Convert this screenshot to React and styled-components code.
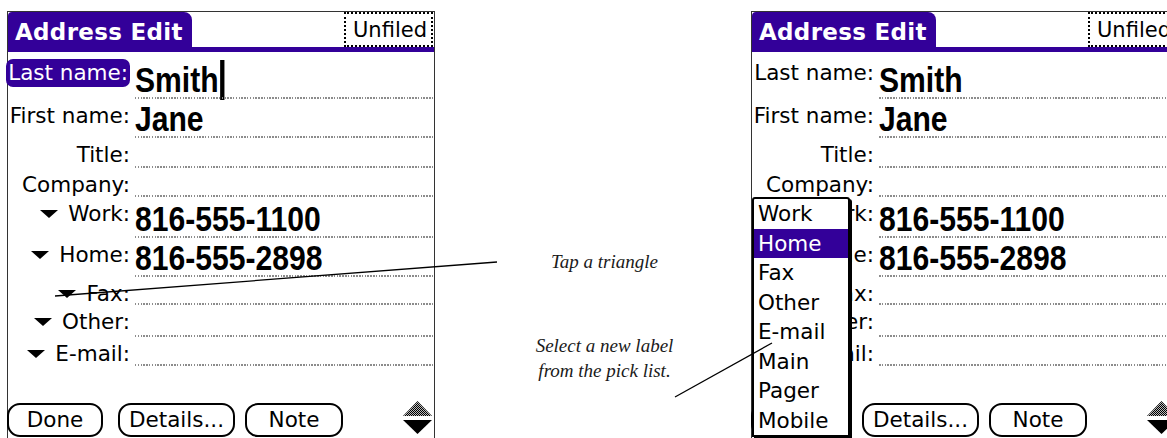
import React from 'react';
import styled, { createGlobalStyle } from 'styled-components';

const PURPLE = '#330099';

const GlobalStyle = createGlobalStyle`
  html, body {
    margin: 0;
    padding: 0;
    background: #fff;
  }
  body {
    width: 1167px;
    height: 438px;
    overflow: hidden;
  }
`;

const Page = styled.div`
  position: relative;
  width: 1167px;
  height: 438px;
  overflow: hidden;
  box-sizing: border-box;
  padding: 11px 0 0 7px;
  display: flex;
  align-items: flex-start;
  font-family: 'DejaVu Sans', 'Liberation Sans', sans-serif;
  color: #000;
`;

const Screen = styled.div`
  position: relative;
  flex: none;
  width: 428px;
  height: 427px;
  box-sizing: border-box;
  border: 1px solid #333;
  border-bottom: none;
  display: flex;
  flex-direction: column;
`;

const TitleBar = styled.div`
  display: flex;
  align-items: flex-start;
  height: 35px;
  border-bottom: 5px solid ${PURPLE};
`;

const TitleTab = styled.div`
  width: 184px;
  height: 35px;
  box-sizing: border-box;
  padding-left: 7px;
  background: ${PURPLE};
  color: #fff;
  border-radius: 4px 8px 0 0;
  font-weight: bold;
  font-size: 23px;
  line-height: 40px;
  letter-spacing: 0.3px;
  white-space: nowrap;
`;

const Category = styled.div`
  margin-left: auto;
  margin-right: 1px;
  height: 35px;
  box-sizing: border-box;
  border: 2px dotted #000;
  padding: 0 4px 0 7px;
  font-size: 21px;
  line-height: 33px;
  white-space: nowrap;
`;

const Form = styled.div`
  padding-top: 4px;
  display: flex;
  flex-direction: column;
`;

const Row = styled.div`
  display: flex;
  height: ${(p) => p.$h}px;
`;

const LabelCell = styled.div`
  width: 122px;
  flex: none;
  display: flex;
  justify-content: flex-end;
  align-items: flex-start;
  padding-top: ${(p) => (p.$active ? 3 : 6)}px;
`;

const Label = styled.div`
  display: flex;
  align-items: center;
  font-size: 21.5px;
  line-height: 21px;
  white-space: nowrap;
  padding: ${(p) => (p.$active ? '3px 2px 4px 2px' : '0')};
  background: ${(p) => (p.$active ? PURPLE : 'transparent')};
  color: ${(p) => (p.$active ? '#fff' : '#000')};
  border-radius: 7px;
`;

const Triangle = styled.svg`
  width: 18px;
  height: 8px;
  margin-right: 10px;
  margin-top: 1px;
  flex: none;
`;

const Field = styled.div`
  position: relative;
  flex: 1;
  margin: 0 1px 0 5px;
  display: flex;
  align-items: flex-end;

  &::after {
    content: '';
    position: absolute;
    left: 0;
    right: 0;
    bottom: 0;
    height: 2px;
    background: repeating-linear-gradient(
      to right,
      #8c8c8c 0 1.5px,
      transparent 1.5px 2.8px
    );
  }
`;

const Value = styled.span`
  display: inline-flex;
  align-items: flex-end;
  font-family: 'Liberation Sans', Arial, sans-serif;
  font-weight: bold;
  font-size: 35px;
  line-height: 35px;
  padding-bottom: 2px;
  white-space: nowrap;
  transform: scaleX(0.86);
  transform-origin: left bottom;
`;

const Cursor = styled.span`
  display: block;
  width: 5px;
  height: 40px;
  margin: 0 0 -3px 2px;
  background: #000;
`;

const ButtonBar = styled.div`
  margin-top: auto;
  margin-left: -1px;
  height: 35px;
  display: flex;
  align-items: flex-start;
`;

const Button = styled.div`
  width: ${(p) => p.$w}px;
  margin-left: ${(p) => p.$ml || 0}px;
  height: 34px;
  box-sizing: border-box;
  border: 2px solid #000;
  border-radius: 13px;
  font-size: 21.5px;
  line-height: 30px;
  text-align: center;
  white-space: nowrap;
`;

const Scroller = styled.svg`
  margin-left: auto;
  margin-right: 1px;
  margin-top: -3px;
  width: 31px;
  height: 36px;
`;

const Middle = styled.div`
  flex: none;
  width: 316px;
  box-sizing: border-box;
  padding: 239px 0 0 23px;
  display: flex;
  flex-direction: column;
  align-items: center;
  font-family: 'Liberation Serif', 'DejaVu Serif', serif;
  font-style: italic;
  font-size: 19px;
  color: #1a1a1a;
`;

const Note = styled.div`
  text-align: center;
  line-height: ${(p) => p.$lh || 24}px;
  margin-top: ${(p) => p.$mt || 0}px;
`;

const PickList = styled.div`
  position: absolute;
  left: 0;
  top: 185px;
  width: 98px;
  height: 240px;
  box-sizing: border-box;
  background: #fff;
  border: 2px solid #000;
  border-radius: 3px 3px 0 0;
  box-shadow: 2px 2px 0 #000;
  z-index: 2;
`;

const PickItem = styled.div`
  height: 29.5px;
  padding-left: 4px;
  font-size: 21.5px;
  line-height: 29.5px;
  background: ${(p) => (p.$selected ? PURPLE : 'transparent')};
  color: ${(p) => (p.$selected ? '#fff' : '#000')};
`;

const Callouts = styled.svg`
  position: absolute;
  left: 0;
  top: 0;
  width: 1167px;
  height: 438px;
  pointer-events: none;
  z-index: 5;
`;

const rows = [
  { label: 'Last name:', value: 'Smith', h: 43, name: true },
  { label: 'First name:', value: 'Jane', h: 39 },
  { label: 'Title:', h: 30 },
  { label: 'Company:', h: 29 },
  { label: 'Work:', value: '816-555-1100', h: 41, pick: true },
  { label: 'Home:', value: '816-555-2898', h: 39, pick: true },
  { label: 'Fax:', h: 28, pick: true },
  { label: 'Other:', h: 32, pick: true },
  { label: 'E-mail:', h: 29, pick: true },
];

const pickItems = ['Work', 'Home', 'Fax', 'Other', 'E-mail', 'Main', 'Pager', 'Mobile'];

function Tri() {
  return (
    <Triangle viewBox="0 0 18 8">
      <polygon points="0,0 18,0 9,8" fill="#000" />
    </Triangle>
  );
}

function AddressScreen({ editing, picking }) {
  return (
    <Screen>
      <TitleBar>
        <TitleTab>Address Edit</TitleTab>
        <Category>Unfiled</Category>
      </TitleBar>
      <Form>
        {rows.map((r) => (
          <Row key={r.label} $h={r.h}>
            <LabelCell $active={editing && r.name}>
              <Label $active={editing && r.name}>
                {r.pick && <Tri />}
                {r.label}
              </Label>
            </LabelCell>
            <Field>
              {r.value && (
                <Value>
                  {r.value}
                  {editing && r.name && <Cursor />}
                </Value>
              )}
            </Field>
          </Row>
        ))}
      </Form>
      <ButtonBar>
        <Button $w={96}>Done</Button>
        <Button $w={117} $ml={15}>Details...</Button>
        <Button $w={98} $ml={10}>Note</Button>
        <Scroller viewBox="0 0 31 36">
          <defs>
            <pattern id="dither" width="2" height="2" patternUnits="userSpaceOnUse">
              <rect x="0" y="0" width="2" height="2" fill="#bbb" />
              <rect x="0" y="0" width="1" height="1" fill="#000" />
              <rect x="1" y="1" width="1" height="1" fill="#000" />
            </pattern>
          </defs>
          <polygon points="15.5,1 30,16 1,16" fill="url(#dither)" />
          <polygon points="1,20 30,20 15.5,34" fill="#000" />
        </Scroller>
      </ButtonBar>
      {picking && (
        <PickList>
          {pickItems.map((item) => (
            <PickItem key={item} $selected={item === 'Home'}>
              {item}
            </PickItem>
          ))}
        </PickList>
      )}
    </Screen>
  );
}

export default function App() {
  return (
    <>
      <GlobalStyle />
      <Page>
        <AddressScreen editing />
        <Middle>
          <Note>Tap a triangle</Note>
          <Note $mt={59} $lh={25}>
            Select a new label
            <br />
            from the pick list.
          </Note>
        </Middle>
        <AddressScreen picking />
        <Callouts viewBox="0 0 1167 438">
          <line x1="55" y1="296" x2="497" y2="262" stroke="#000" strokeWidth="1.3" />
          <line x1="675" y1="397" x2="772" y2="343" stroke="#000" strokeWidth="1.3" />
        </Callouts>
      </Page>
    </>
  );
}
